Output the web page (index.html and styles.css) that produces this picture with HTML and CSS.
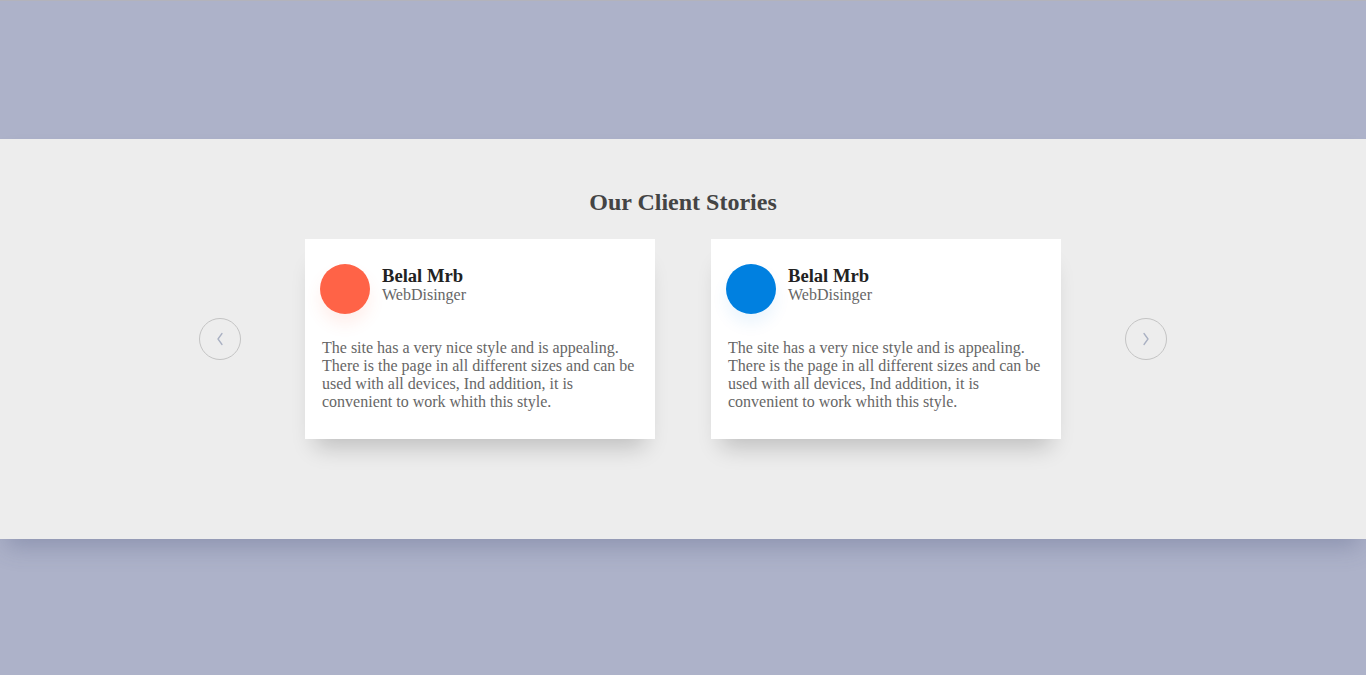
FILE: index.html
```html
<!DOCTYPE html>
<html>
<head>
<meta charset="utf-8">
<link rel="stylesheet" href="styles.css">
</head>
<body>
<section class="stories">
  <h2 class="title">Our Client Stories</h2>
  <div class="slider">
    <button class="arrow"><svg width="8" height="14" viewBox="0 0 8 14"><path d="M6 1.5 L2 7 L6 12.5" fill="none" stroke="#a9b0c2" stroke-width="1.3" stroke-linecap="round" stroke-linejoin="round"/></svg></button>
    <div class="cards">
      <div class="card">
        <div class="head">
          <div class="avatar red"></div>
          <div class="who">
            <div class="name">Belal Mrb</div>
            <div class="role">WebDisinger</div>
          </div>
        </div>
        <p class="text">The site has a very nice style and is appealing. There is the page in all different sizes and can be used with all devices, Ind addition, it is convenient to work whith this style.</p>
      </div>
      <div class="card">
        <div class="head">
          <div class="avatar blue"></div>
          <div class="who">
            <div class="name">Belal Mrb</div>
            <div class="role">WebDisinger</div>
          </div>
        </div>
        <p class="text">The site has a very nice style and is appealing. There is the page in all different sizes and can be used with all devices, Ind addition, it is convenient to work whith this style.</p>
      </div>
    </div>
    <button class="arrow"><svg width="8" height="14" viewBox="0 0 8 14"><path d="M2 1.5 L6 7 L2 12.5" fill="none" stroke="#a9b0c2" stroke-width="1.3" stroke-linecap="round" stroke-linejoin="round"/></svg></button>
  </div>
</section>
</body>
</html>
```
FILE: styles.css
```css
html, body {
  margin: 0;
  padding: 0;
}
body {
  background: #adb2c9;
  font-family: "Liberation Serif", "Times New Roman", serif;
  height: 675px;
  overflow: hidden;
  border-top: 1px solid #b3b3bb;
  box-sizing: border-box;
}
.stories {
  margin-top: 138px;
  height: 400px;
  background: #ededed;
  box-shadow: 0 14px 22px -6px rgba(70, 80, 120, 0.3);
  box-sizing: border-box;
  padding-top: 48px;
}
.title {
  margin: 0;
  text-align: center;
  font-size: 24px;
  line-height: 30px;
  font-weight: bold;
  color: #444;
}
.slider {
  margin-top: 22px;
  display: flex;
  justify-content: center;
  align-items: center;
  gap: 64px;
}
.arrow {
  width: 42px;
  height: 42px;
  border-radius: 50%;
  border: 1px solid #c4c4c4;
  background: transparent;
  padding: 0;
  display: flex;
  align-items: center;
  justify-content: center;
  cursor: pointer;
}
.cards {
  display: flex;
  gap: 56px;
}
.card {
  width: 350px;
  height: 200px;
  background: #fff;
  box-sizing: border-box;
  padding: 25px 15px 0 15px;
  box-shadow: 0 18px 22px -10px rgba(0, 0, 0, 0.2);
}
.head {
  display: flex;
  align-items: center;
  gap: 12px;
}
.avatar {
  width: 50px;
  height: 50px;
  border-radius: 50%;
  flex: none;
}
.avatar.red {
  background: #ff6347;
  box-shadow: 0 10px 16px rgba(255, 99, 71, 0.1);
}
.avatar.blue {
  background: #0080e0;
  box-shadow: 0 10px 16px rgba(0, 128, 224, 0.08);
}
.who {
  margin-top: -10px;
}
.name {
  font-size: 18.6px;
  font-weight: bold;
  color: #222;
  line-height: 21px;
}
.role {
  font-size: 16px;
  color: #666;
  line-height: 18px;
}
.text {
  margin: 25px 0 0 2px;
  font-size: 16px;
  line-height: 18px;
  color: #666;
}
```
